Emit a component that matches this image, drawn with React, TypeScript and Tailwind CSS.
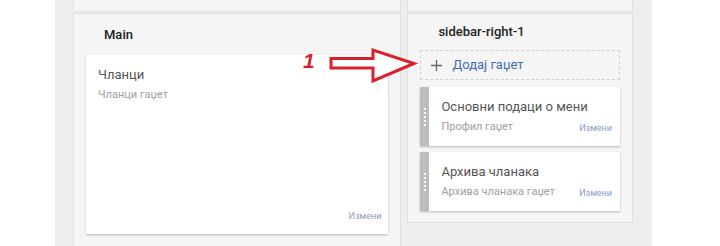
import React from 'react';

const font = { fontFamily: 'Roboto, "Noto Sans", sans-serif' };

const Gadget = ({ title, sub }: { title: string; sub: string }) => (
  <div className="flex h-[59px] bg-white shadow-[0_1px_2px_rgba(0,0,0,0.25)]">
    <div className="w-[9px] bg-[#bdbdbd] flex items-center justify-center">
      <div className="h-[18px] border-l-2 border-dotted border-white/90" />
    </div>
    <div className="flex-1 relative pl-[12px] pt-[11px]">
      <div className="text-[13px] text-[#555] leading-[18px]">{title}</div>
      <div className="text-[11px] text-[#a0a0a0] leading-[14px] mt-[4px]">{sub}</div>
      <div className="absolute right-[8px] bottom-[11px] text-[9px] text-[#8d9bc4]">Измени</div>
    </div>
  </div>
);

const App: React.FC = () => {
  return (
    <div className="relative w-[720px] h-[246px] bg-white overflow-hidden flex" style={font}>
      <div className="ml-[55px] w-[597px] h-full bg-[#eeeeee] pl-[18px] pr-[19px] flex gap-[6px]">
        {/* main column */}
        <div className="w-[329px] flex flex-col">
          <div className="h-[12px] bg-[#f5f5f5] border-x border-b border-[#e0e0e0]" />
          <div className="flex-1 mt-[1px] bg-[#f5f5f5] border border-b-0 border-[#e0e0e0] px-[12px]">
            <div className="h-[41px] pl-[18px] flex items-center text-[13px] font-medium text-[#222]">Main</div>
            <div className="relative h-[179px] bg-white shadow-[0_1px_2px_rgba(0,0,0,0.25)] pl-[12px] pt-[11px]">
              <div className="text-[13px] text-[#555] leading-[18px]">Чланци</div>
              <div className="text-[11px] text-[#a0a0a0] leading-[14px] mt-[4px]">Чланци гаџет</div>
              <div className="absolute right-[7px] bottom-[11px] text-[9px] text-[#8d9bc4]">Измени</div>
            </div>
          </div>
        </div>
        {/* sidebar column */}
        <div className="w-[226px] flex flex-col">
          <div className="h-[12px] bg-[#f5f5f5] border-x border-b border-[#e0e0e0]" />
          <div className="mt-[1px] bg-[#f5f5f5] border border-[#e0e0e0] px-[12px] pb-[11px]">
            <div className="h-[36px] pl-[18px] flex items-center text-[13px] font-medium text-[#222]">sidebar-right-1</div>
            <div className="h-[30px] border border-dashed border-[#cfcfcf] flex items-center pl-[10px] gap-[10px]">
              <svg width="11" height="11" viewBox="0 0 11 11" className="text-[#666]">
                <path d="M5.5 0v11M0 5.5h11" stroke="currentColor" strokeWidth="1.3" />
              </svg>
              <span className="text-[13px] text-[#3f6db5]">Додај гаџет</span>
            </div>
            <div className="mt-[7px] flex flex-col gap-[6px]">
              <Gadget title="Основни подаци о мени" sub="Профил гаџет" />
              <Gadget title="Архива чланака" sub="Архива чланака гаџет" />
            </div>
          </div>
        </div>
      </div>
      {/* annotation */}
      <div className="absolute left-[303px] top-[50px] text-[21px] leading-[21px] font-bold italic text-[#d7222c]" style={{ fontFamily: '"Liberation Sans", Arial, sans-serif' }}>1</div>
      <svg className="absolute left-[328px] top-[47px]" width="90" height="38" viewBox="0 0 90 38">
        <path d="M3 11.5 H45 V3 L86 16.5 L45 34 V21 H3 Z" fill="white" stroke="#d7222c" strokeWidth="3" strokeLinejoin="miter" />
      </svg>
    </div>
  );
};

export default App;
